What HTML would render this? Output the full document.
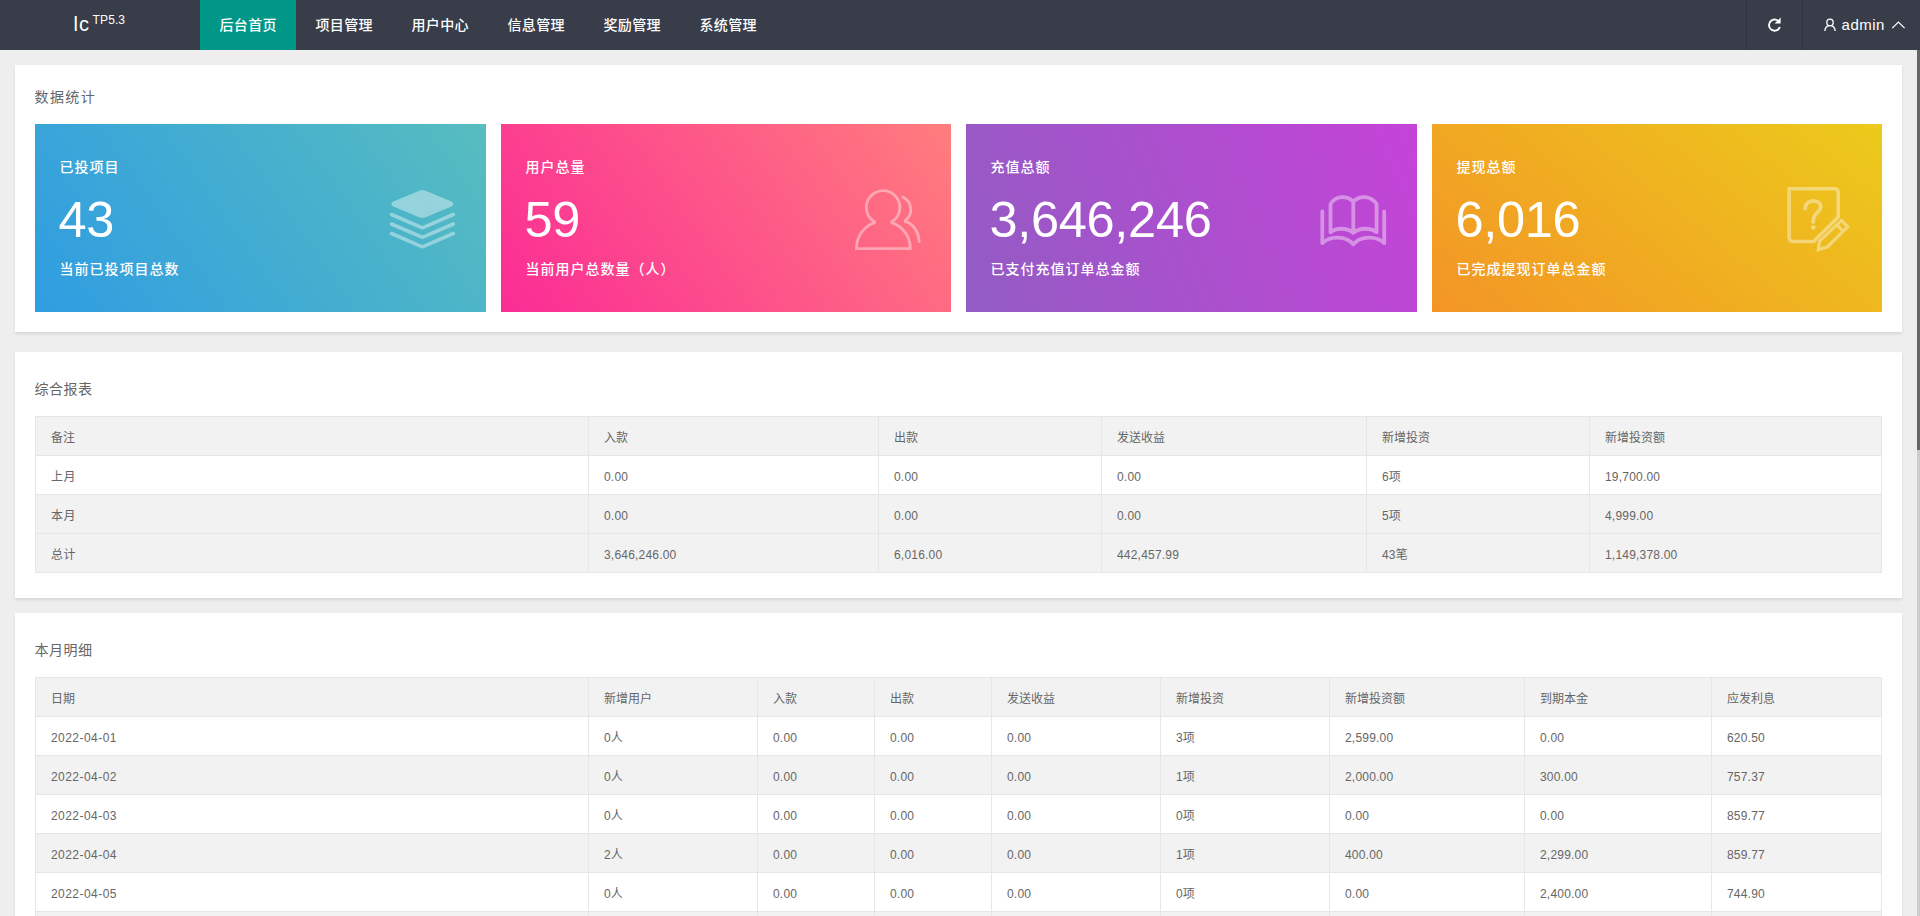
<!DOCTYPE html>
<html lang="zh-CN">
<head>
<meta charset="utf-8">
<title>后台首页</title>
<style>
*{box-sizing:border-box;margin:0;padding:0}
html,body{width:1920px;height:916px;overflow:hidden}
body{background:#eeeeee;font-family:"Liberation Sans","Noto Sans CJK SC",sans-serif;font-size:14px;color:#666;position:relative}
a{color:inherit;text-decoration:none}
ul{list-style:none}
/* header */
.header{position:absolute;left:0;top:0;width:1920px;height:50px;background:#393d49;color:#fff;z-index:5}
.logo{position:absolute;left:0;top:0;width:200px;height:50px;color:#fff}

.logo .t1{position:absolute;left:73.500px;top:12px;font-size:20px;line-height:24px;letter-spacing:1px}
.logo .t2{position:absolute;left:92.600px;letter-spacing:.1px;top:12.6px;font-size:12px;line-height:14px}
.nav{position:absolute;left:200px;top:0;height:50px;display:flex}
.nav li{width:96px;height:50px;line-height:51px;text-align:center;font-size:14px;color:#fff;font-weight:500;letter-spacing:.4px;padding-left:.4px}
.nav li.on{background:#009688}
.hright{position:absolute;right:0;top:0;height:50px;display:flex}
.hright .cell{height:50px;border-left:1px solid rgba(0,0,0,.14);position:relative}
.hright .c1{width:56px}
.hright .c2{width:118px}
.hright .uname{position:absolute;left:38.600px;top:0;line-height:49px;font-size:15px;color:#fff;letter-spacing:.5px}
.hright svg{position:absolute}
/* scrollbar */
.sbar{position:absolute;right:0;top:50px;width:3px;height:866px;background:#ccc;z-index:4}
.sbar i{display:block;width:3px;height:400px;background:#666}
/* panels */
.panel{position:absolute;left:15px;width:1887px;background:#fff;box-shadow:0 2px 3px 0 rgba(0,0,0,.1)}
.panel h3{position:absolute;left:19.500px;font-weight:normal;font-size:14px;letter-spacing:.5px;color:#666;line-height:20px}
.p1{top:65px;height:267px}
.p2{top:352px;height:246px}
.p3{top:613px;height:400px}
/* cards */
.cards{position:absolute;left:20px;top:59px;width:1847px;height:188px}
.card{position:absolute;top:0;width:451px;height:188px;color:#fff;letter-spacing:1px}
.card .lab{position:absolute;left:24.4px;top:33px;font-size:14px;line-height:20px;font-weight:500}
.card .num{position:absolute;left:23.5px;top:69.5px;font-size:50.5px;line-height:52px;letter-spacing:-.3px}
.card .sub{position:absolute;left:24.4px;top:135px;font-size:14px;line-height:20px;font-weight:500}
.card svg{position:absolute;left:0;top:0}
.k1{left:0;background:linear-gradient(-125deg,#57bdbf,#2f9de2)}
.k2{left:466px;width:450px;background:linear-gradient(-125deg,#ff7d7d,#fb2c95)}
.k3{left:931px;background:linear-gradient(-113deg,#c543d8,#925cc3)}
.k4{left:1397px;width:450px;background:linear-gradient(-141deg,#ecca1b,#f39526)}
/* tables */
table{position:absolute;left:20px;border-collapse:collapse;table-layout:fixed;width:1847px;font-size:12px;color:#666}
td,th{height:39px;border:1px solid #e6e6e6;padding:3px 15px 0;text-align:left;font-weight:normal;line-height:20px;white-space:nowrap}
thead tr,tr.g{background:#f2f2f2}
td{letter-spacing:.2px}
td:first-child{letter-spacing:.45px}
</style>
</head>
<body>
<div class="header">
  <div class="logo"><span class="t1">lc</span><span class="t2">TP5.3</span></div>
  <ul class="nav">
    <li class="on">后台首页</li>
    <li>项目管理</li>
    <li>用户中心</li>
    <li>信息管理</li>
    <li>奖励管理</li>
    <li>系统管理</li>
  </ul>
  <div class="hright">
    <div class="cell c1">
      <svg width="56" height="50" viewBox="0 0 56 50"><path d="M32.6 22.6A5.6 5.6 0 1 0 32.9 27" fill="none" stroke="#fff" stroke-width="1.9"/><path d="M33.6 17.6v6h-6z" fill="#fff"/></svg>
    </div>
    <div class="cell c2">
      <svg width="118" height="50" viewBox="0 0 118 50"><circle cx="27" cy="22.4" r="3.2" fill="none" stroke="#fff" stroke-width="1.3"/><path d="M21.8 31c.3-3.6 2.4-5.4 5.2-5.4s4.900 1.800 5.200 5.400" fill="none" stroke="#fff" stroke-width="1.300"/><path d="M89.200 28.200l6.200-6.200 6.200 6.200" fill="none" stroke="#fff" stroke-width="1.200"/></svg>
      <span class="uname">admin</span>
    </div>
  </div>
</div>
<div class="sbar"><i></i></div>

<div class="panel p1">
  <h3 style="top:22px;letter-spacing:1.4px">数据统计</h3>
  <div class="cards">
    <div class="card k1"><svg width="451" height="188" viewBox="0 0 451 188"><g opacity=".4" fill="none" stroke="#fff" stroke-linecap="round" stroke-linejoin="round"><path d="M391.2 66.9L414.7 76.8Q422.3 80 414.7 83.2L391.2 93.100Q387.400 94.700 383.600 93.100L360.100 83.200Q352.500 80 360.100 76.800L383.600 66.900Q387.400 65.300 391.200 66.900Z" fill="#fff" stroke="none"/><path d="M356.5 90.5L387.4 103.8L418.3 90.5M356.500 100L387.400 113.300L418.300 100M356.500 109.500L387.400 122.800L418.300 109.500" stroke-width="3.6"/></g></svg><div class="lab">已投项目</div><div class="num">43</div><div class="sub">当前已投项目总数</div></div>
    <div class="card k2"><svg width="450" height="188" viewBox="0 0 450 188"><g opacity=".4" fill="none" stroke="#fff" stroke-width="2.9" stroke-linecap="round" stroke-linejoin="miter" stroke-miterlimit="2"><path d="M374.3 98.3A16.8 16.8 0 1 1 389.900 98.300A26.800 26.800 0 0 1 409.200 124.600L355.600 124.600A26.800 26.800 0 0 1 374.300 98.300Z"/><path d="M401.8 73.100A13.700 13.700 0 0 1 403.400 97.100A18 22 0 0 1 418.100 117.500"/></g></svg><div class="lab">用户总量</div><div class="num">59</div><div class="sub">当前用户总数量（人）</div></div>
    <div class="card k3"><svg width="451" height="188" viewBox="0 0 451 188"><g opacity=".4" fill="none" stroke="#fff" stroke-width="3.8" stroke-linecap="round" stroke-linejoin="round"><path d="M364.5 108.200V80C370 71.300 381 71.300 387.300 77.500C393.600 71.300 404.600 71.300 410.600 80V108.200C404.600 103.500 393.600 103.500 387.300 108.800C381 103.500 370 103.500 364.500 108.200ZM387.300 77.500V108.800"/><path d="M356.300 87.500V119.100C364 111.500 380 111.500 387.300 120.200C394.600 111.500 410.600 111.500 418.200 119.100V87.500"/></g></svg><div class="lab">充值总额</div><div class="num">3,646,246</div><div class="sub">已支付充值订单总金额</div></div>
    <div class="card k4"><svg width="450" height="188" viewBox="0 0 450 188"><g opacity=".4" fill="none" stroke="#fff" stroke-width="3.6" stroke-linejoin="miter"><path d="M357.100 64.800H402.400Q406.200 64.800 406.200 68.600V92.900L381.700 117.500H361.500Q357.100 117.500 357.100 113.100Z"/><path d="M373.200 84.800C373.200 74.500 388.800 74.500 388.800 83.100C388.800 88.500 381.100 88 381.100 97.900" stroke-linecap="round" stroke-width="3.800"/><circle cx="381.300" cy="103.300" r="2.400" fill="#fff" stroke="none"/><path d="M409.500 96.400L415.700 102.800L395.300 123L386.300 125.700L387.600 117.200ZM404.800 101.100L411.400 107.400" stroke-width="3.200"/></g></svg><div class="lab">提现总额</div><div class="num">6,016</div><div class="sub">已完成提现订单总金额</div></div>
  </div>
</div>

<div class="panel p2">
  <h3 style="top:27px">综合报表</h3>
  <table style="top:64px">
    <colgroup><col style="width:553px"><col style="width:290px"><col style="width:223px"><col style="width:265px"><col style="width:223px"><col></colgroup>
    <thead><tr><th>备注</th><th>入款</th><th>出款</th><th>发送收益</th><th>新增投资</th><th>新增投资额</th></tr></thead>
    <tbody>
      <tr><td>上月</td><td>0.00</td><td>0.00</td><td>0.00</td><td>6项</td><td>19,700.00</td></tr>
      <tr class="g"><td>本月</td><td>0.00</td><td>0.00</td><td>0.00</td><td>5项</td><td>4,999.00</td></tr>
      <tr class="g"><td>总计</td><td>3,646,246.00</td><td>6,016.00</td><td>442,457.99</td><td>43笔</td><td>1,149,378.00</td></tr>
    </tbody>
  </table>
</div>

<div class="panel p3">
  <h3 style="top:27px">本月明细</h3>
  <table style="top:64px">
    <colgroup><col style="width:553px"><col style="width:169px"><col style="width:117px"><col style="width:117px"><col style="width:169px"><col style="width:169px"><col style="width:195px"><col style="width:187px"><col></colgroup>
    <thead><tr><th>日期</th><th>新增用户</th><th>入款</th><th>出款</th><th>发送收益</th><th>新增投资</th><th>新增投资额</th><th>到期本金</th><th>应发利息</th></tr></thead>
    <tbody>
      <tr><td>2022-04-01</td><td>0人</td><td>0.00</td><td>0.00</td><td>0.00</td><td>3项</td><td>2,599.00</td><td>0.00</td><td>620.50</td></tr>
      <tr class="g"><td>2022-04-02</td><td>0人</td><td>0.00</td><td>0.00</td><td>0.00</td><td>1项</td><td>2,000.00</td><td>300.00</td><td>757.37</td></tr>
      <tr><td>2022-04-03</td><td>0人</td><td>0.00</td><td>0.00</td><td>0.00</td><td>0项</td><td>0.00</td><td>0.00</td><td>859.77</td></tr>
      <tr class="g"><td>2022-04-04</td><td>2人</td><td>0.00</td><td>0.00</td><td>0.00</td><td>1项</td><td>400.00</td><td>2,299.00</td><td>859.77</td></tr>
      <tr><td>2022-04-05</td><td>0人</td><td>0.00</td><td>0.00</td><td>0.00</td><td>0项</td><td>0.00</td><td>2,400.00</td><td>744.90</td></tr>
      <tr class="g"><td>2022-04-06</td><td>0人</td><td>0.00</td><td>0.00</td><td>0.00</td><td>0项</td><td>0.00</td><td>0.00</td><td>744.90</td></tr>
      <tr><td>2022-04-07</td><td>0人</td><td>0.00</td><td>0.00</td><td>0.00</td><td>0项</td><td>0.00</td><td>0.00</td><td>744.90</td></tr>
    </tbody>
  </table>
</div>
</body>
</html>
